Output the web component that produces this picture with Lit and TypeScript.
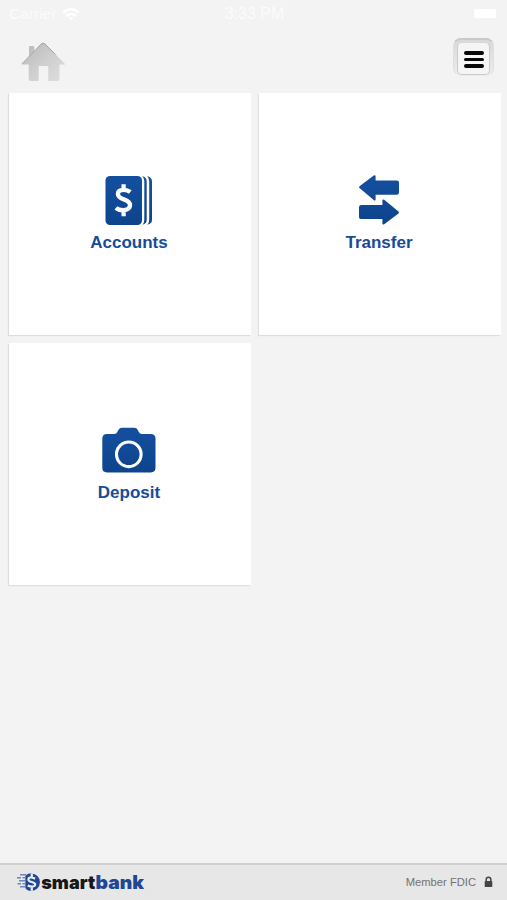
import { LitElement, html, css, svg } from "lit";
import { customElement, property } from "lit/decorators.js";

const accountsIcon = svg`
  <rect x="25.5" y="16" width="36.5" height="49" rx="4.5"/>
  <path d="M62.3 16.3Q66.7 17 66.7 21.5V59.5Q66.7 64 62.3 64.7Q64.3 63 64.3 60V21Q64.3 18 62.3 16.3Z"/>
  <path d="M67.2 16.3Q72 17 72 21.5V59.5Q72 64 67.2 64.7Q69.2 63 69.2 60V21Q69.2 18 67.2 16.3Z"/>
  <path d="M50.3 32C48.4 30.5 46.1 29.9 43.7 29.9C39.9 29.9 37.9 31.6 37.9 34.1C37.9 40.8 50 37.9 50 45.1C50 48.6 46.8 50.2 43 50.2C40.2 50.2 37.6 49.4 35.9 47.9M43.6 24.2V30M43.6 50V56.2" fill="none" stroke="#fff" stroke-width="4.3"/>`;

const transferIcon = svg`
  <path d="M29.5 28.1Q28.5 27.2 29.5 26.3L43.8 15.5Q45.6 14.7 45.6 16.6V20.5H66.8Q69 20.5 69 22.7V32.6Q69 34.8 66.8 34.8H45.6V39.6Q45.6 41.3 44 40.3Z"/>
  <path d="M68.5 51.5Q69.5 52.4 68.5 53.4L54.2 64.2Q52.4 65.2 52.4 63.3V59.1H31.2Q29 59.1 29 56.9V47.3Q29 45.1 31.2 45.1H52.4V40.6Q52.4 38.7 54.2 39.8Z"/>`;

const depositIcon = svg`
  <path d="M27 24H34.2Q36.5 24 37.5 21.7L38.3 19.9Q39.5 17.8 42 17.8H54.2Q56.8 17.8 57.8 19.9L58.8 22Q59.6 24 62 24H70.7Q75.5 24 75.5 28.6V57.8Q75.5 62.4 70.7 62.4H27Q22.3 62.4 22.3 57.8V28.6Q22.3 24 27 24Z"/>
  <circle cx="48.8" cy="44.3" r="12.3" fill="none" stroke="#fff" stroke-width="3.1"/>`;

const tiles = [
  { label: "Accounts", icon: accountsIcon },
  { label: "Transfer", icon: transferIcon },
  { label: "Deposit", icon: depositIcon },
];

@customElement("menu-tile")
class MenuTile extends LitElement {
  @property() label = "";
  @property({ attribute: false }) icon: unknown;

  static styles = css`
    :host {
      box-sizing: border-box;
      display: flex;
      flex-direction: column;
      align-items: center;
      padding: 67px 2px 0 0;
      background: #fff;
      box-shadow: -1px 1px 1px #dedede;
    }
    .icon { width: 98px; height: 72px; display: block; fill: url(#blue); }
    .label {
      margin-top: 1px;
      font: bold 17px/20px "Liberation Sans", Arial, sans-serif;
      color: #174b98;
    }
  `;

  render() {
    return html`
      <svg class="icon" viewBox="0 0 98 72">
        <defs>
          <linearGradient id="blue" gradientUnits="userSpaceOnUse" x1="0" y1="14" x2="0" y2="66">
            <stop offset="0" stop-color="#1450a0"/><stop offset="1" stop-color="#0e438b"/>
          </linearGradient>
        </defs>
        ${this.icon}
      </svg>
      <div class="label">${this.label}</div>`;
  }
}

@customElement("app-root")
class AppRoot extends LitElement {
  static styles = css`
    :host {
      display: flex;
      flex-direction: column;
      width: 507px;
      height: 900px;
      overflow: hidden;
      background: #f3f3f3;
      font-family: "Liberation Sans", Arial, sans-serif;
    }
    .status {
      display: grid;
      grid-template-columns: 1fr auto 1fr;
      align-items: center;
      height: 28px;
      padding: 0 11px 0 13px;
      box-sizing: border-box;
      color: #fbfbfb;
      font-size: 16px;
    }
    .carrier { display: flex; align-items: center; gap: 6px; margin-left: -4px; font-size: 15.5px; }
    .wifi { width: 18px; height: 13px; }
    .battery { justify-self: end; width: 22px; height: 9px; margin-bottom: 1px; border-radius: 2px; background: #fff; }
    .header {
      display: flex;
      justify-content: space-between;
      box-sizing: border-box;
      height: 65px;
      padding: 10px 13px 0 20px;
    }
    .home { width: 48px; height: 46px; margin-top: 2px; }
    .menu {
      box-sizing: border-box;
      width: 41px;
      height: 38px;
      padding: 2px 3px 0;
      border: 1px solid #dfdfdf;
      border-top: 2px solid #c9c9c9;
      border-bottom-color: #ebebeb;
      border-radius: 8px;
      background: linear-gradient(#d9d9d9, #ececec);
    }
    .face {
      box-sizing: border-box;
      display: flex;
      flex-direction: column;
      align-items: center;
      justify-content: center;
      gap: 3px;
      width: 33px;
      height: 33px;
      padding-top: 2px;
      border: 1px solid #cbcbcb;
      border-top-color: #d9d9d9;
      border-radius: 5px;
      background: #f5f5f5;
    }
    .bar { width: 20px; height: 3.6px; border-radius: 2px; background: #080808; }
    .grid {
      flex: 1;
      display: grid;
      grid-template-columns: 242px 242px;
      grid-auto-rows: 242px;
      gap: 8px;
      padding-left: 9px;
    }
    .footer {
      box-sizing: border-box;
      display: flex;
      align-items: center;
      justify-content: space-between;
      height: 37px;
      padding: 0 14px 2px 16px;
      border-top: 2px solid #d0d0d0;
      background: #e7e7e7;
    }
    .logo { width: 132px; height: 26px; }
    .word { font: 900 18.5px Inter, "Liberation Sans", sans-serif; }
    .fdic { display: flex; align-items: center; gap: 8px; font-size: 11.2px; color: #727272; }
    .lock { width: 9px; height: 12px; }
  `;

  render() {
    return html`
      <div class="status">
        <div class="carrier">
          <span>Carrier</span>
          <svg class="wifi" viewBox="0 0 18 13" fill="none" stroke="#fff" stroke-width="2.4">
            <path d="M1 4.5Q9-1.8 17 4.5M4 8Q9 4 14 8"/><path d="M6.5 10Q9 8 11.5 10L9 12.5Z" fill="#fff" stroke="none"/>
          </svg>
        </div>
        <span>3:33 PM</span>
        <div class="battery"></div>
      </div>
      <div class="header">
        <svg class="home" viewBox="0 0 48 46">
          <defs>
            <linearGradient id="grey" x1="0" y1="0" x2="1" y2="1">
              <stop offset="0" stop-color="#b7b7b7"/><stop offset=".5" stop-color="#cecece"/><stop offset="1" stop-color="#dedede"/>
            </linearGradient>
          </defs>
          <path d="M1.5 24.5L9 16.8V7.3Q9 6 10.3 6H13Q14.3 6 14.3 7.3V11.6L20.7 4.2Q23 1.6 25.5 4L45.5 24.5H39.5V38.5Q39.5 41 37 41H28.3V26H18.7V41H11Q8.7 41 8.7 38.5V24.5Z" fill="url(#grey)"/>
          <path d="M2 23.8L21 4.2Q23 2.2 25.2 4.2L35.5 14.5" fill="none" stroke="#a5a5a5" stroke-width="1"/>
        </svg>
        <div class="menu">
          <div class="face"><div class="bar"></div><div class="bar"></div><div class="bar"></div></div>
        </div>
      </div>
      <div class="grid">
        ${tiles.map((t) => html`<menu-tile .label=${t.label} .icon=${t.icon}></menu-tile>`)}
      </div>
      <div class="footer">
        <svg class="logo" viewBox="0 0 132 26">
          <path d="M13 4.6H15.5A8.4 8.6 0 0 1 15.5 21.8H13Q10.5 21 9.3 19V7.2Q10.5 5.2 13 4.6Z" fill="#214794"/>
          <path d="M4 5.8H10M1 8.8H5M6.5 8.8H10M3 11.8H9.5M1.5 14.8H5M6.5 14.8H10M4 17.8H10" stroke="#6f86b8" stroke-width="1.6"/>
          <path d="M19.2 9.6Q12.3 7 12.4 10.7C12.6 13.7 19.4 12.3 19.2 15.7Q18.5 18.9 11.7 16.6M15.8 4.6V8.6M15.8 17.4V21.8" fill="none" stroke="#e9edf5" stroke-width="2.2"/>
          <g class="word">
            <text x="25.2" y="20" fill="#171717" textLength="54" lengthAdjust="spacingAndGlyphs">smart</text>
            <text x="79.5" y="20" fill="#214794" textLength="48.5" lengthAdjust="spacingAndGlyphs">bank</text>
          </g>
        </svg>
        <div class="fdic">
          <span>Member FDIC</span>
          <svg class="lock" viewBox="0 0 9 12">
            <path d="M2.2 6V3.6Q2.2 1.2 4.5 1.2T6.8 3.6V6" fill="none" stroke="#454545" stroke-width="1.5"/>
            <rect x=".7" y="5" width="7.6" height="6" rx=".7" fill="#454545"/>
          </svg>
        </div>
      </div>`;
  }
}
